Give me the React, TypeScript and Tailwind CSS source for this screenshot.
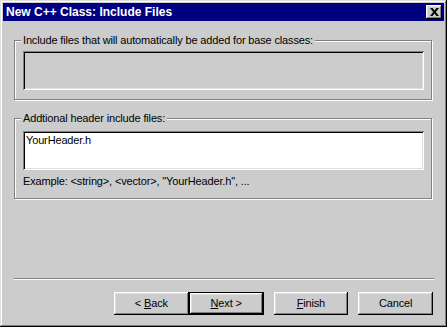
import React from "react";

const raised =
  "shadow-[inset_-1px_-1px_0_#000,inset_1px_1px_0_#fff,inset_-2px_-2px_0_#808080,inset_2px_2px_0_#dfdfdf]";
const sunken =
  "shadow-[inset_1px_1px_0_#808080,inset_-1px_-1px_0_#fff,inset_2px_2px_0_#000,inset_-2px_-2px_0_#dfdfdf]";
const etched =
  "border border-[#808080] shadow-[inset_1px_1px_0_#fff,1px_1px_0_#fff]";

function Btn({
  children,
  def,
  className = "",
}: {
  children: React.ReactNode;
  def?: boolean;
  className?: string;
}) {
  if (def) {
    return (
      <div className={`w-[75px] h-[23px] border border-black ${className}`}>
        <div
          className={`w-full h-full flex items-center justify-center ${raised}`}
        >
          {children}
        </div>
      </div>
    );
  }
  return (
    <div
      className={`w-[75px] h-[23px] flex items-center justify-center ${raised} ${className}`}
    >
      {children}
    </div>
  );
}

export default function App() {
  return (
    <div
      className="w-[447px] h-[327px] bg-[#cccccc] flex flex-col p-[3px] text-black text-[11px] leading-[13px] tracking-[-0.15px] shadow-[inset_-1px_-1px_0_#000,inset_1px_1px_0_#dfdfdf,inset_-2px_-2px_0_#808080,inset_2px_2px_0_#fff]"
      style={{ fontFamily: '"Liberation Sans", Arial, sans-serif' }}
    >
      {/* Title bar */}
      <div className="h-[18px] bg-[#000080] flex items-center justify-between pl-[3px] pr-[2px]">
        <span className="text-white font-bold text-[12px] tracking-normal leading-[18px]">
          New C++ Class: Include Files
        </span>
        <div
          className={`w-[16px] h-[14px] bg-[#cccccc] flex items-center justify-center ${raised}`}
        >
          <svg width="9" height="8" viewBox="0 0 9 8" className="mb-[1px]">
            <path
              d="M0 0h2.5L4.5 2.5 6.5 0H9L5.8 4 9 8H6.5L4.5 5.5 2.5 8H0L3.2 4z"
              fill="#000"
            />
          </svg>
        </div>
      </div>

      <div className="flex flex-col px-[11px]">
        {/* Group 1 */}
        <div
          className={`relative mt-[19px] w-[418px] ${etched} pt-[10px] pb-[9px] pl-[8px]`}
        >
          <span className="absolute left-[6px] top-[-7px] px-[2px] bg-[#cccccc]">
            Include files that will automatically be added for base classes:
          </span>
          <div className={`w-[401px] h-[39px] bg-[#cccccc] ${sunken}`} />
        </div>

        {/* Group 2 */}
        <div
          className={`relative mt-[18px] w-[418px] ${etched} pt-[12px] pb-[10px] pl-[8px]`}
        >
          <span className="absolute left-[6px] top-[-7px] px-[2px] bg-[#cccccc]">
            Addtional header include files:
          </span>
          <div className={`w-[401px] h-[39px] bg-white pt-[3px] pl-[3px] ${sunken}`}>
            YourHeader.h
          </div>
          <div className="mt-[5px]">
            Example: &lt;string&gt;, &lt;vector&gt;, "YourHeader.h", ...
          </div>
        </div>

        {/* Separator */}
        <div className="mt-[79px] w-[420px] h-[2px] border-t border-[#808080] border-b border-b-white" />

        {/* Buttons */}
        <div className="mt-[12px] flex ml-[100px]">
          <Btn>
            <span>
              &lt; <u className="underline-offset-1">B</u>ack
            </span>
          </Btn>
          <Btn def>
            <span>
              <u className="underline-offset-1">N</u>ext &gt;
            </span>
          </Btn>
          <Btn className="ml-[10px]">
            <span>
              <u className="underline-offset-1">F</u>inish
            </span>
          </Btn>
          <Btn className="ml-[10px]">
            <span>Cancel</span>
          </Btn>
        </div>
      </div>
    </div>
  );
}
